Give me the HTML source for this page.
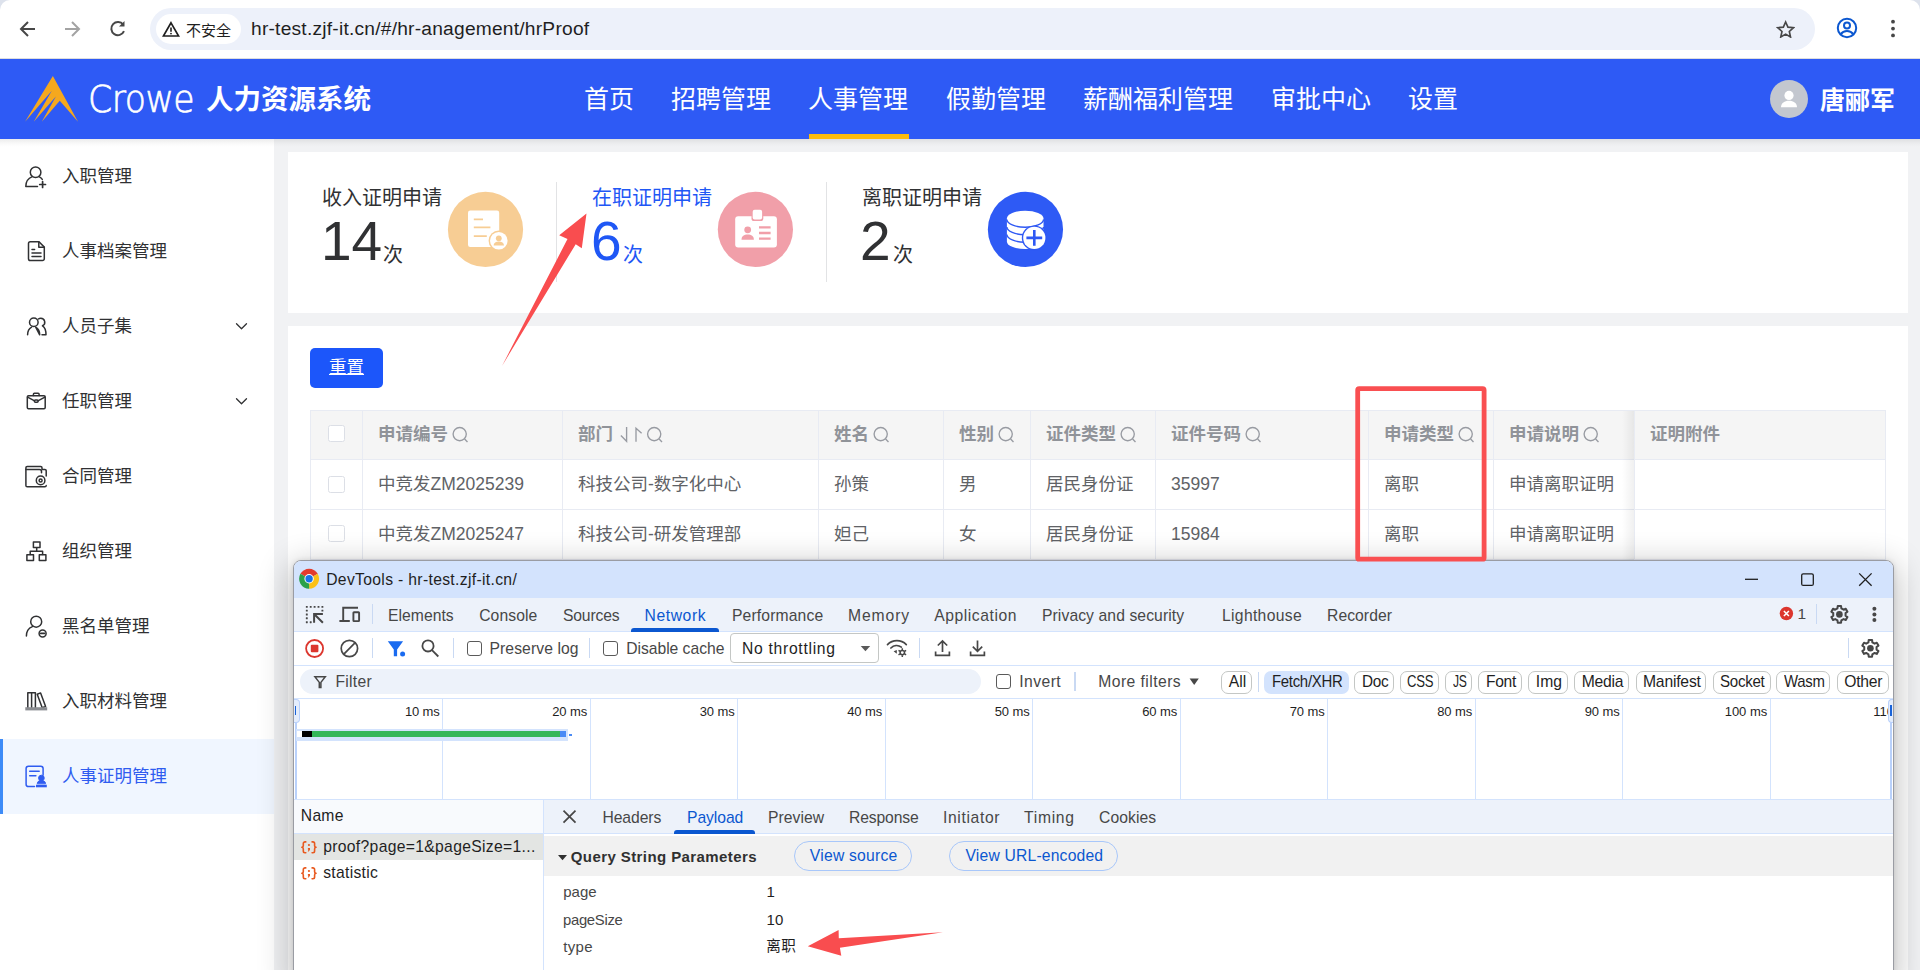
<!DOCTYPE html>
<html lang="zh-CN">
<head>
<meta charset="utf-8">
<title>人力资源系统</title>
<style>
*{box-sizing:border-box;margin:0;padding:0}
html,body{width:1920px;height:970px;overflow:hidden;background:#fff}
body{position:relative;font-family:"Liberation Sans","Noto Sans CJK SC",sans-serif;color:#303133}
.abs{position:absolute}
.t{position:absolute;white-space:nowrap;line-height:1}
/* browser chrome */
#chrome{position:absolute;left:0;top:0;width:1920px;height:58px;background:#fff}
#chromeline{position:absolute;left:0;top:58px;width:1920px;height:1px;background:#dcdde0}
#omni{position:absolute;left:150px;top:8px;width:1665px;height:42px;border-radius:21px;background:#edf1fa}
#chip{position:absolute;left:156px;top:14px;width:85px;height:30px;border-radius:15px;background:#fff}
/* app header */
#hdr{position:absolute;left:0;top:59px;width:1920px;height:80px;background:#2e5af5}
.nav{position:absolute;top:85px;font-size:25px;line-height:28px;color:#fff;white-space:nowrap}
/* sidebar */
#side{position:absolute;left:0;top:139px;width:274px;height:831px;background:#fff}
.mi{position:absolute;left:62px;font-size:17.5px;line-height:20px;color:#303133;white-space:nowrap}
.ic{position:absolute}
/* main */
#main{position:absolute;left:274px;top:139px;width:1646px;height:831px;background:#f1f2f4}
.card{position:absolute;background:#fff}
.th{font-size:17.5px;font-weight:bold;color:#909399}
.td{font-size:17.5px;color:#606266}
</style>
</head>
<body>
<!-- ===== browser toolbar ===== -->
<div id="chrome"></div>
<div id="chromeline"></div>
<div id="omni"></div>
<div id="chip"></div>

<svg class="abs" style="left:15.500px;top:16.700px" width="120" height="24" viewBox="0 0 120 24" fill="none" stroke-width="2" stroke-linecap="butt" stroke-linejoin="miter">
<path d="M19 12H5.5M12 5l-7 7 7 7" stroke="#474747"/>
<path d="M49 12h13.5M56 5l7 7-7 7" stroke="#a3a3a3"/>
<path d="M107.2 7.6A6.6 6.6 0 1 0 108 14.2" stroke="#474747"/>
<path d="M108.5 4v5.5h-5.5z" fill="#474747" stroke="none"/>
</svg>
<svg class="abs" style="left:162px;top:21px" width="18" height="16" viewBox="0 0 18 16" fill="none"><path d="M9 1.8L16.6 15H1.4z" stroke="#1f1f1f" stroke-width="1.7" stroke-linejoin="miter"/><path d="M9 6.5v4.2" stroke="#1f1f1f" stroke-width="1.6"/><circle cx="9" cy="12.6" r="0.9" fill="#1f1f1f"/></svg>
<svg class="abs" style="left:1775.800px;top:19.800px" width="19.300" height="18.400" viewBox="0 0 21 20" fill="none"><path d="M10.5 2.2l2.5 5.6 6.1.6-4.6 4.1 1.3 6-5.3-3.1-5.3 3.1 1.3-6L1.9 8.4 8 7.8z" stroke="#474747" stroke-width="1.8" stroke-linejoin="miter"/></svg>
<svg class="abs" style="left:1835.200px;top:16.200px" width="24" height="24" viewBox="0 0 24 24" fill="none" stroke="#0b57d0" stroke-width="2"><circle cx="12" cy="12" r="9.2"/><circle cx="12" cy="9.6" r="3"/><path d="M5.8 18.2c1.5-2.3 3.7-3.2 6.2-3.2s4.700.9 6.200 3.200"/></svg>
<svg class="abs" style="left:1888.500px;top:17px" width="8" height="24" viewBox="0 0 8 24" fill="#474747"><circle cx="4" cy="4.700" r="1.9"/><circle cx="4" cy="11.600" r="1.9"/><circle cx="4" cy="18.400" r="1.9"/></svg>
<div class="abs" style="left:0;top:0;width:10px;height:10px;background:#dde2ec"></div><div class="abs" style="left:0;top:0;width:12px;height:12px;border-radius:10px 0 0 0;background:#fff"></div><div class="abs" style="left:1910px;top:0;width:10px;height:10px;background:#dde2ec"></div><div class="abs" style="left:1908px;top:0;width:12px;height:12px;border-radius:0 10px 0 0;background:#fff"></div>

<!-- CHROME-ICONS -->
<div class="t" id="unsafe" style="left:186px;top:23px;font-size:15px;color:#1f1f1f">不安全</div>
<div class="t" id="url" style="left:251px;top:19px;font-size:19.2px;letter-spacing:0.22px;color:#1f1f1f">hr-test.zjf-it.cn/#/hr-anagement/hrProof</div>

<!-- ===== app header ===== -->
<div id="hdr"></div>

<svg class="abs" style="left:24px;top:74px" width="56" height="50" viewBox="24 74 56 50"><path d="M52.860 76.050L25.050 121.700 51.850 90.800 33.760 121.700 55.870 96.500 41.800 121.700 59.760 100.850 78 121.700z" fill="#f5a81e"/></svg>

<!-- LOGO -->
<div class="t" id="crowe" style="left:88px;top:80.600px;font-family:'DejaVu Sans','Liberation Sans',sans-serif;font-weight:200;font-size:37.700px;color:#fff;letter-spacing:-0.500px;-webkit-text-stroke:0.700px #fff;transform:scaleX(0.918);transform-origin:0 50%">Crowe</div>
<div class="t" id="sysname" style="left:206px;top:85.500px;font-size:27.5px;font-weight:bold;color:#fff">人力资源系统</div>
<div class="nav" id="n1" style="left:584px">首页</div>
<div class="nav" id="n2" style="left:671px">招聘管理</div>
<div class="nav" id="n3" style="left:808px">人事管理</div>
<div class="nav" id="n4" style="left:946px">假勤管理</div>
<div class="nav" id="n5" style="left:1083px">薪酬福利管理</div>
<div class="nav" id="n6" style="left:1271px">审批中心</div>
<div class="nav" id="n7" style="left:1408px">设置</div>
<div class="abs" style="left:809px;top:134px;width:100px;height:5px;background:#fbbb0c"></div>
<div class="abs" style="left:1770px;top:80px;width:38px;height:38px;border-radius:19px;background:#c3c7cf"></div>

<svg class="abs" style="left:1770px;top:80px" width="38" height="38" viewBox="1770 80 38 38" fill="#fff"><circle cx="1789" cy="95.400" r="4.600"/><path d="M1781 107.200c0-4.200 3.600-6.400 8-6.400s8 2.200 8 6.400z"/></svg>

<!-- AVATAR -->
<div class="t" id="uname" style="left:1820px;top:88px;font-size:25px;font-weight:bold;color:#fff">唐郦军</div>

<!-- ===== sidebar ===== -->
<div id="side"></div>
<div class="abs" style="left:0;top:739px;width:274px;height:75px;background:#f0f6ff"></div>
<div class="abs" style="left:0;top:739px;width:3px;height:75px;background:#3d8bf7"></div>
<div class="mi" style="top:166px">入职管理</div>
<div class="mi" style="top:241px">人事档案管理</div>
<div class="mi" style="top:316px">人员子集</div>
<div class="mi" style="top:391px">任职管理</div>
<div class="mi" style="top:466px">合同管理</div>
<div class="mi" style="top:541px">组织管理</div>
<div class="mi" style="top:616px">黑名单管理</div>
<div class="mi" style="top:691px">入职材料管理</div>
<div class="mi" style="top:766px;color:#2f5cf0">人事证明管理</div>

<svg class="abs" style="left:20px;top:160px" width="32" height="640" viewBox="20 160 32 640" fill="none" stroke="#303133" stroke-width="1.500" stroke-linecap="round" stroke-linejoin="round">
<!-- 1 user add -->
<circle cx="35.600" cy="172.200" r="5.300"/>
<path d="M37.500 186.600H25.800C25.800 181.500 28.600 178 32.300 176.600M38.900 176.600C40.300 177.200 41.500 178.200 42.300 179.400"/>
<path d="M42.600 181.600v5.800M39.700 184.500h5.800" stroke-width="1.700"/>
<!-- 2 doc -->
<path d="M30.300 241.800h8.700l5.300 5.300v11.600a1.800 1.800 0 0 1-1.800 1.800H30.300a1.800 1.800 0 0 1-1.800-1.800v-15.100a1.800 1.800 0 0 1 1.800-1.800z"/>
<path d="M38.800 242v5.300h5.300"/>
<path d="M32 249.600h2.600M32 253.100h9M32 256.600h9"/>
<!-- 3 users -->
<circle cx="33.800" cy="322.300" r="4.300"/>
<path d="M27.600 334.800c0-3.600 1.600-6.400 4-7.700M35.700 327.100c2.400 1.300 4 4.100 4 7.700z"/>
<path d="M38.300 319c.7-.5 1.600-.8 2.500-.8a4 4 0 0 1 1.700 7.600c2.200 1.300 3.500 3.900 3.500 9h-4"/>
<!-- 4 briefcase -->
<rect x="27.300" y="395.800" width="17.900" height="13" rx="1.200"/>
<path d="M33.400 395.600v-1.300a1 1 0 0 1 1-1h3.700a1 1 0 0 1 1 1v1.300"/>
<path d="M27.600 397.200l7 3.700M44.900 397.200l-7 3.700"/>
<rect x="34.400" y="399.900" width="3.700" height="2.400" rx="1"/>
<!-- 5 folder gear -->
<path d="M46.200 476v-5.200a1.300 1.300 0 0 0-1.300-1.300H42v-1.700a1.300 1.300 0 0 0-1.300-1.300H27.200a1.300 1.300 0 0 0-1.300 1.300v17.700a1.300 1.300 0 0 0 1.300 1.300h17.700a1.300 1.300 0 0 0 1.300-1.300"/>
<path d="M26 469.600h13.500a2 2 0 0 1 2 2v1.200"/>
<circle cx="40.600" cy="480.400" r="4.300"/>
<circle cx="40.600" cy="480.400" r="1.500"/>
<!-- 6 org -->
<rect x="33.400" y="542" width="6.600" height="5.600"/>
<rect x="26.900" y="554.800" width="6.600" height="5.800"/>
<rect x="39.300" y="554.800" width="6.600" height="5.800"/>
<path d="M36.700 547.800v3.400M30.200 554.600v-3.400h12.400v3.400"/>
<!-- 7 user minus -->
<circle cx="36.200" cy="621.700" r="5.500"/>
<path d="M26.400 636c0-4.500 2.500-8 6-9.400"/>
<circle cx="42.600" cy="633.400" r="3.500"/>
<path d="M40.700 633.400h3.800" stroke-width="1.700"/>
<!-- 8 books -->
<path d="M27.800 707.500v-14.800h3.800v14.800M31.600 707.500v-14.800h3.800v14.800"/>
<path d="M37.200 694.200l3.400-1.300 5 13.500-3.400 1.300z"/>
<path d="M25.300 708.800h21.900" stroke="#8a8c90" stroke-width="3.200" stroke-linecap="butt"/>
<!-- 9 doc stamp -->
<g stroke="#2f5cf0">
<path d="M34.500 786.600h-6a2.400 2.400 0 0 1-2.400-2.400v-15.600a2.400 2.400 0 0 1 2.400-2.400h12.200a2.400 2.400 0 0 1 2.400 2.400v6.400"/>
<path d="M29.700 771.300h9.500M29.700 775.700h6.200"/>
<path d="M36 786h10.800" stroke-width="2.600" stroke-linecap="butt"/>
<path d="M37.300 783.300c0-1.500 1.200-2.300 2.700-2.600-1-.9-1.400-1.700-1.400-2.700a2.800 2.800 0 0 1 5.600 0c0 1-.4 1.800-1.400 2.700 1.500.3 2.700 1.100 2.700 2.600z" fill="#2f5cf0" stroke-width="1"/>
</g>
</svg>
<svg class="abs" style="left:234px;top:320px" width="16" height="90" viewBox="234 320 16 90" fill="none" stroke="#303133" stroke-width="1.300" stroke-linecap="round" stroke-linejoin="round"><path d="M236.500 323.700l5 5 5-5M236.500 398.700l5 5 5-5"/></svg>

<!-- SIDE-ICONS -->

<!-- ===== main ===== -->
<div id="main"></div>
<div class="abs" style="left:0;top:139px;width:1920px;height:8px;background:linear-gradient(rgba(0,0,0,0.075),rgba(0,0,0,0.02) 60%,rgba(0,0,0,0))"></div>
<div class="card" id="c1" style="left:288px;top:152px;width:1620px;height:161px"></div>
<div class="card" id="c2" style="left:288px;top:326px;width:1620px;height:644px"></div>

<div class="t" id="s1l" style="left:322px;top:188px;font-size:20px;color:#303133">收入证明申请</div>
<div class="t" id="s1n" style="left:321px;top:214px;font-size:55px;color:#303133">14</div>
<div class="t" id="s1u" style="left:383px;top:245px;font-size:20px;color:#303133">次</div>
<div class="abs" style="left:556px;top:182px;width:1px;height:100px;background:#e2e3e5"></div>
<div class="t" id="s2l" style="left:592px;top:188px;font-size:20px;color:#1f57f5">在职证明申请</div>
<div class="t" id="s2n" style="left:591px;top:214px;font-size:55px;color:#1f57f5">6</div>
<div class="t" id="s2u" style="left:623px;top:245px;font-size:20px;color:#1f57f5">次</div>
<div class="abs" style="left:826px;top:182px;width:1px;height:100px;background:#e2e3e5"></div>
<div class="t" id="s3l" style="left:862px;top:188px;font-size:20px;color:#303133">离职证明申请</div>
<div class="t" id="s3n" style="left:860px;top:214px;font-size:55px;color:#303133">2</div>
<div class="t" id="s3u" style="left:893px;top:245px;font-size:20px;color:#303133">次</div>
<svg class="abs" style="left:440px;top:185px" width="640" height="90" viewBox="440 185 640 90">
<!-- icon 1 -->
<circle cx="485.500" cy="229.400" r="37.600" fill="#f7cd94"/>
<rect x="468" y="210.600" width="31.200" height="36.400" rx="2.200" fill="#fff"/>
<path d="M473.800 219.400h9.200M473.800 227.300h16.600M473.800 236.200h13" stroke="#f7cd94" stroke-width="1.700" fill="none"/>
<circle cx="498.800" cy="240.800" r="10.200" fill="#f7cd94"/>
<circle cx="498.800" cy="240.800" r="8.800" fill="#fff"/>
<circle cx="498.800" cy="238.300" r="2.900" fill="#f7cd94"/>
<path d="M493.600 245.400c0-2.600 2.300-3.900 5.200-3.900s5.200 1.300 5.200 3.900z" fill="#f7cd94"/>
<!-- icon 2 -->
<circle cx="755.400" cy="229.400" r="37.600" fill="#f19fa9"/>
<rect x="735.200" y="216.300" width="41.700" height="31.200" rx="3" fill="#fff"/>
<rect x="751.500" y="208.800" width="11.800" height="12.200" rx="2.600" fill="#f19fa9"/>
<rect x="752.700" y="209.800" width="9.400" height="9.800" rx="2" fill="#fff"/>
<circle cx="747.700" cy="229.800" r="3.400" fill="#f19fa9"/>
<path d="M741.500 239.800c0-3.600 2.600-5.200 6.200-5.200s6.200 1.600 6.200 5.200z" fill="#f19fa9"/>
<path d="M759 227.300h11.600M759 233h11.600M759 238.700h11.600" stroke="#f19fa9" stroke-width="2.300" fill="none"/>
<!-- icon 3 -->
<circle cx="1025.450" cy="229.400" r="37.600" fill="#2e5af5"/>
<path d="M1006.900 218.400a18.300 7.700 0 0 1 36.600 0v23a18.300 7.700 0 0 1-36.600 0z" fill="#fff"/>
<path d="M1006.900 219.500c0 4.300 8.200 7.700 18.300 7.700s18.300-3.400 18.300-7.700M1006.900 227c0 4.300 8.200 7.700 18.300 7.700s18.300-3.400 18.300-7.700M1006.900 234.500c0 4.300 8.200 7.700 18.300 7.700s18.300-3.400 18.300-7.700" stroke="#2e58f4" stroke-width="1.400" fill="none"/>
<circle cx="1034.300" cy="237.900" r="12.500" fill="#2e58f4"/>
<circle cx="1034.300" cy="237.900" r="11.100" fill="#fff"/>
<path d="M1026.400 237.900h15.800M1034.300 230v15.800" stroke="#2e58f4" stroke-width="2.600" fill="none"/>
</svg>

<!-- STATS -->
<div class="abs" id="btn" style="left:310px;top:348px;width:73px;height:40px;border-radius:5px;background:#1c56fa"></div>
<div class="t" id="btnt" style="left:329px;top:359px;font-size:17.5px;color:#fff;text-decoration:underline;text-underline-offset:1px;text-decoration-thickness:1px">重置</div>
<div class="abs" style="left:310px;top:410px;width:1576px;height:49px;background:#f5f5f5"></div>
<div class="abs" style="left:310px;top:410px;width:1576px;height:1px;background:#e8ebf3"></div>
<div class="abs" style="left:310px;top:459px;width:1576px;height:1px;background:#e8ebf3"></div>
<div class="abs" style="left:310px;top:509px;width:1576px;height:1px;background:#e8ebf3"></div>
<div class="abs" style="left:310px;top:559px;width:1576px;height:1px;background:#e8ebf3"></div>
<div class="abs" style="left:310px;top:410px;width:1px;height:160px;background:#e8ebf3"></div>
<div class="abs" style="left:362px;top:410px;width:1px;height:160px;background:#e8ebf3"></div>
<div class="abs" style="left:562px;top:410px;width:1px;height:160px;background:#e8ebf3"></div>
<div class="abs" style="left:818px;top:410px;width:1px;height:160px;background:#e8ebf3"></div>
<div class="abs" style="left:943px;top:410px;width:1px;height:160px;background:#e8ebf3"></div>
<div class="abs" style="left:1030px;top:410px;width:1px;height:160px;background:#e8ebf3"></div>
<div class="abs" style="left:1155px;top:410px;width:1px;height:160px;background:#e8ebf3"></div>
<div class="abs" style="left:1368px;top:410px;width:1px;height:160px;background:#e8ebf3"></div>
<div class="abs" style="left:1493px;top:410px;width:1px;height:160px;background:#e8ebf3"></div>
<div class="abs" style="left:1634px;top:410px;width:1px;height:160px;background:#e8ebf3"></div>
<div class="abs" style="left:1885px;top:410px;width:1px;height:160px;background:#e8ebf3"></div>
<div class="abs" style="left:1622px;top:411px;width:12px;height:159px;background:linear-gradient(to right,rgba(0,0,0,0),rgba(0,0,0,0.06))"></div>
<div class="abs" style="left:328px;top:425px;width:17px;height:17px;border:1px solid #dcdfe6;border-radius:2.500px;background:#fff"></div>
<div class="abs" style="left:328px;top:476px;width:17px;height:17px;border:1px solid #dcdfe6;border-radius:2.500px;background:#fff"></div>
<div class="abs" style="left:328px;top:525px;width:17px;height:17px;border:1px solid #dcdfe6;border-radius:2.500px;background:#fff"></div>
<div class="t th" style="left:378px;top:426px">申请编号</div>
<div class="t th" style="left:578px;top:426px">部门</div>
<div class="t th" style="left:834px;top:426px">姓名</div>
<div class="t th" style="left:959px;top:426px">性别</div>
<div class="t th" style="left:1046px;top:426px">证件类型</div>
<div class="t th" style="left:1171px;top:426px">证件号码</div>
<div class="t th" style="left:1384px;top:426px">申请类型</div>
<div class="t th" style="left:1509px;top:426px">申请说明</div>
<div class="t th" style="left:1650px;top:426px">证明附件</div>
<div class="t td" style="left:378px;top:476px">中竞发ZM2025239</div>
<div class="t td" style="left:578px;top:476px">科技公司-数字化中心</div>
<div class="t td" style="left:834px;top:476px">孙策</div>
<div class="t td" style="left:959px;top:476px">男</div>
<div class="t td" style="left:1046px;top:476px">居民身份证</div>
<div class="t td" style="left:1171px;top:476px">35997</div>
<div class="t td" style="left:1384px;top:476px">离职</div>
<div class="t td" style="left:1509px;top:476px">申请离职证明</div>
<div class="t td" style="left:378px;top:526px">中竞发ZM2025247</div>
<div class="t td" style="left:578px;top:526px">科技公司-研发管理部</div>
<div class="t td" style="left:834px;top:526px">妲己</div>
<div class="t td" style="left:959px;top:526px">女</div>
<div class="t td" style="left:1046px;top:526px">居民身份证</div>
<div class="t td" style="left:1171px;top:526px">15984</div>
<div class="t td" style="left:1384px;top:526px">离职</div>
<div class="t td" style="left:1509px;top:526px">申请离职证明</div>
<svg class="abs" style="left:310px;top:420px" width="1576" height="30" viewBox="310 420 1576 30" fill="none" stroke="#989ba2" stroke-width="1.350" stroke-linecap="butt"><circle cx="459.7" cy="434.1" r="6.600"/><path d="M464.59999999999997 439.0l2.900 2.900"/><path d="M626.6 427v14.300l-5.700-5.700M636.0 441.800v-13.500l5.600 5"/><circle cx="654.2" cy="434.1" r="6.600"/><path d="M659.1 439.0l2.900 2.900"/><circle cx="880.7" cy="434.1" r="6.600"/><path d="M885.6 439.0l2.900 2.900"/><circle cx="1005.7" cy="434.1" r="6.600"/><path d="M1010.6 439.0l2.900 2.900"/><circle cx="1127.7" cy="434.1" r="6.600"/><path d="M1132.6000000000001 439.0l2.900 2.900"/><circle cx="1252.7" cy="434.1" r="6.600"/><path d="M1257.6000000000001 439.0l2.900 2.900"/><circle cx="1465.7" cy="434.1" r="6.600"/><path d="M1470.6000000000001 439.0l2.900 2.900"/><circle cx="1590.7" cy="434.1" r="6.600"/><path d="M1595.6000000000001 439.0l2.900 2.900"/></svg>
<!-- TABLE -->
<!-- DT-START -->
<div class="abs" id="dtwin" style="left:293px;top:560px;width:1601px;height:420px;border-radius:8px 8px 0 0;background:#fff;border:1px solid #9a9ca3;box-shadow:0 8px 32px 4px rgba(0,0,0,0.24),0 0 5px rgba(0,0,0,0.10)"></div>
<div class="abs" style="left:294px;top:561px;width:1599px;height:37px;border-radius:7px 7px 0 0;background:#d3e3fd"></div>
<div class="abs" style="left:294px;top:598px;width:1599px;height:34px;background:#edf2fa;border-bottom:1px solid #d3e3fd"></div>
<div class="abs" style="left:294px;top:632px;width:1599px;height:34px;background:#fff;border-bottom:1px solid #d3e3fd"></div>
<div class="abs" style="left:294px;top:666px;width:1599px;height:33px;background:#fff;border-bottom:1px solid #d3e3fd"></div>
<div class="abs" style="left:631px;top:628px;width:88px;height:4px;border-radius:3px 3px 0 0;background:#0b57d0"></div>
<div class="abs" style="left:372px;top:604px;width:1px;height:20px;background:#c9d9f3"></div>
<div class="abs" style="left:372px;top:638px;width:1px;height:20px;background:#c9d9f3"></div>
<div class="abs" style="left:453px;top:638px;width:1px;height:20px;background:#c9d9f3"></div>
<div class="abs" style="left:589px;top:638px;width:1px;height:20px;background:#c9d9f3"></div>
<div class="abs" style="left:919px;top:638px;width:1px;height:20px;background:#c9d9f3"></div>
<div class="abs" style="left:1816px;top:604px;width:1px;height:20px;background:#c9d9f3"></div>
<div class="abs" style="left:1848px;top:638px;width:1px;height:20px;background:#c9d9f3"></div>
<div class="abs" style="left:1074px;top:672px;width:2px;height:19px;background:#c9d9f3"></div>
<div class="abs" style="left:1258px;top:672px;width:1px;height:20px;background:#c9d9f3"></div>
<div class="abs" style="left:467px;top:641px;width:15px;height:15px;border:1.500px solid #5a5a5a;border-radius:3px;background:#fff"></div>
<div class="abs" style="left:603px;top:641px;width:15px;height:15px;border:1.500px solid #5a5a5a;border-radius:3px;background:#fff"></div>
<div class="abs" style="left:996px;top:674px;width:15px;height:15px;border:1.500px solid #5a5a5a;border-radius:3px;background:#fff"></div>
<div class="abs" style="left:730px;top:633px;width:149px;height:30px;border:1px solid #c4c7c5;border-radius:4px;background:#fff"></div>
<div class="abs" style="left:300px;top:669px;width:681px;height:25px;border-radius:12.500px;background:#edf2fa"></div>
<div class="abs" style="left:1221.2px;top:670.500px;width:31.3px;height:23.500px;border-radius:7px;border:1px solid #c4c7c5;background:#fff"></div>
<div class="abs" style="left:1264.2px;top:670.500px;width:84.6px;height:23.500px;border-radius:7px;background:#d3e3fd"></div>
<div class="abs" style="left:1354.2px;top:670.500px;width:40.3px;height:23.500px;border-radius:7px;border:1px solid #c4c7c5;background:#fff"></div>
<div class="abs" style="left:1400.2px;top:670.500px;width:39.3px;height:23.500px;border-radius:7px;border:1px solid #c4c7c5;background:#fff"></div>
<div class="abs" style="left:1445.2px;top:670.500px;width:27.3px;height:23.500px;border-radius:7px;border:1px solid #c4c7c5;background:#fff"></div>
<div class="abs" style="left:1478.2px;top:670.500px;width:44.3px;height:23.500px;border-radius:7px;border:1px solid #c4c7c5;background:#fff"></div>
<div class="abs" style="left:1528.2px;top:670.500px;width:40.0px;height:23.500px;border-radius:7px;border:1px solid #c4c7c5;background:#fff"></div>
<div class="abs" style="left:1574.2px;top:670.500px;width:55.3px;height:23.500px;border-radius:7px;border:1px solid #c4c7c5;background:#fff"></div>
<div class="abs" style="left:1635.8px;top:670.500px;width:70.7px;height:23.500px;border-radius:7px;border:1px solid #c4c7c5;background:#fff"></div>
<div class="abs" style="left:1712.5px;top:670.500px;width:58.0px;height:23.500px;border-radius:7px;border:1px solid #c4c7c5;background:#fff"></div>
<div class="abs" style="left:1776.2px;top:670.500px;width:54.3px;height:23.500px;border-radius:7px;border:1px solid #c4c7c5;background:#fff"></div>
<div class="abs" style="left:1836.5px;top:670.500px;width:52.3px;height:23.500px;border-radius:7px;border:1px solid #c4c7c5;background:#fff"></div>
<div class="abs" style="left:294px;top:699px;width:1599px;height:101px;background:#fff;border-bottom:1px solid #d3e3fd"></div>
<div class="abs" style="left:442.0px;top:699px;width:1px;height:100px;background:#d3e3fd"></div>
<div class="abs" style="left:589.5px;top:699px;width:1px;height:100px;background:#d3e3fd"></div>
<div class="abs" style="left:737.0px;top:699px;width:1px;height:100px;background:#d3e3fd"></div>
<div class="abs" style="left:884.5px;top:699px;width:1px;height:100px;background:#d3e3fd"></div>
<div class="abs" style="left:1032.0px;top:699px;width:1px;height:100px;background:#d3e3fd"></div>
<div class="abs" style="left:1179.5px;top:699px;width:1px;height:100px;background:#d3e3fd"></div>
<div class="abs" style="left:1327.0px;top:699px;width:1px;height:100px;background:#d3e3fd"></div>
<div class="abs" style="left:1474.5px;top:699px;width:1px;height:100px;background:#d3e3fd"></div>
<div class="abs" style="left:1622.0px;top:699px;width:1px;height:100px;background:#d3e3fd"></div>
<div class="abs" style="left:1769.5px;top:699px;width:1px;height:100px;background:#d3e3fd"></div>
<div class="abs" style="left:295px;top:699px;width:1.500px;height:100px;background:#b9d1fb"></div>
<div class="abs" style="left:1890px;top:699px;width:2px;height:100px;background:#b9d1fb"></div>
<div class="abs" style="left:296px;top:729px;width:272px;height:12px;background:#d3e3fd"></div>
<div class="abs" style="left:297px;top:731px;width:5px;height:6px;background:#fff"></div>
<div class="abs" style="left:302px;top:731px;width:10px;height:6px;background:#000"></div>
<div class="abs" style="left:312px;top:731px;width:248px;height:6px;background:#34b75a"></div>
<div class="abs" style="left:560px;top:731px;width:6px;height:6px;background:#4b8bf5"></div>
<div class="abs" style="left:569px;top:734px;width:3px;height:2px;background:#4b8bf5"></div>
<div class="abs" style="left:294px;top:699px;width:6px;height:24px;border-radius:0 4px 4px 0;background:#e4edfc;border:1px solid #b9d1fb;border-left:none"></div>
<div class="abs" style="left:295px;top:706px;width:1.300px;height:9px;background:#1a63d8"></div>
<div class="abs" style="left:1888px;top:699px;width:5px;height:24px;border-radius:4px 0 0 4px;background:#e4edfc;border:1px solid #b9d1fb;border-right:none"></div>
<div class="abs" style="left:1890px;top:705px;width:2px;height:11px;background:#1a63d8"></div>
<div class="abs" style="left:294px;top:800px;width:249px;height:34px;background:#f8fafd;border-bottom:1px solid #d3e3fd"></div>
<div class="abs" style="left:294px;top:834px;width:249px;height:26px;background:#e3e5e3"></div>
<div class="abs" style="left:543px;top:800px;width:1px;height:170px;background:#d3e3fd"></div>
<div class="abs" style="left:544px;top:800px;width:1349px;height:34px;background:#edf2fa;border-bottom:1px solid #d3e3fd"></div>
<div class="abs" style="left:674px;top:830px;width:81px;height:4px;border-radius:3px 3px 0 0;background:#0b57d0"></div>
<div class="abs" style="left:544px;top:836px;width:1349px;height:40px;background:#f1f1f1"></div>
<div class="abs" style="left:794px;top:841px;width:118px;height:30px;border-radius:15px;border:1px solid #a8c7fa"></div>
<div class="abs" style="left:949px;top:841px;width:169px;height:30px;border-radius:15px;border:1px solid #a8c7fa"></div>
<svg class="abs" style="left:294px;top:561px" width="1599" height="409" viewBox="294 561 1599 409">
<path d="M309.1 578.8L300.44 573.80A10 10 0 0 1 317.76 573.80Z" fill="#e33b2e"/>
<path d="M309.1 578.8L317.76 573.80A10 10 0 0 1 309.10 588.80Z" fill="#fbc116"/>
<path d="M309.1 578.8L309.10 588.80A10 10 0 0 1 300.44 573.80Z" fill="#2ca14a"/>
<circle cx="309.1" cy="578.8" r="4.700" fill="#fff"/><circle cx="309.1" cy="578.8" r="3.700" fill="#1a73e8"/>
<g fill="none" stroke="#1f1f1f" stroke-width="1.300"><path d="M1745 579.300h13"/><rect x="1801.700" y="573.800" width="11.600" height="11.600" rx="1.500"/><path d="M1859.200 573.400l12.400 12.400M1871.600 573.400l-12.400 12.400"/></g>
<g fill="#474747"><rect x="305.85" y="605.95" width="1.900" height="1.900" rx=".3"/><rect x="309.75" y="605.95" width="1.900" height="1.900" rx=".3"/><rect x="313.65" y="605.95" width="1.900" height="1.900" rx=".3"/><rect x="317.55" y="605.95" width="1.900" height="1.900" rx=".3"/><rect x="321.45" y="605.95" width="1.900" height="1.900" rx=".3"/><rect x="305.85" y="609.65" width="1.900" height="1.900" rx=".3"/><rect x="305.85" y="613.55" width="1.900" height="1.900" rx=".3"/><rect x="305.85" y="617.35" width="1.900" height="1.900" rx=".3"/><rect x="305.85" y="621.25" width="1.900" height="1.900" rx=".3"/><rect x="309.75" y="621.25" width="1.900" height="1.900" rx=".3"/><rect x="321.45" y="609.65" width="1.900" height="1.900" rx=".3"/></g><g fill="none" stroke="#474747" stroke-width="1.900"><path d="M322.900 622.800l-8.300-8.300M314.100 622.700v-8.700h8.800" stroke-width="2"/></g>
<g fill="none" stroke="#474747" stroke-width="1.900"><path d="M343.200 620.200v-12.500h14.800M339.400 621h10.400"/><rect x="353.400" y="612.200" width="5.700" height="8.900" rx=".6"/></g>
<circle cx="314.600" cy="648.500" r="8.500" fill="none" stroke="#dc362e" stroke-width="1.800"/><rect x="310.800" y="644.700" width="7.600" height="7.600" rx="1" fill="#dc362e"/>
<g fill="none" stroke="#474747" stroke-width="1.700"><circle cx="349.400" cy="648.500" r="8.200"/><path d="M343.600 654.300l11.600-11.600"/></g>
<path d="M387.800 641.200h15.300l-6 8.300v6.700h-3.300v-6.700z" fill="#1a6bf0"/><circle cx="402.600" cy="654.100" r="2.500" fill="#1a6bf0"/>
<g fill="none" stroke="#474747" stroke-width="1.800"><circle cx="428" cy="645.900" r="5.600"/><path d="M432 650.200l6.300 6.300"/></g>
<path d="M860.700 646h9.500l-4.750 5.300z" fill="#5a5a5a"/>
<g fill="none" stroke="#474747" stroke-width="1.700" stroke-linecap="round"><path d="M887.500 644.600a13.200 13.200 0 0 1 18.800 0"/><path d="M890.900 648a8.400 8.400 0 0 1 10.500-.9"/></g><path d="M893.600 651.200l3.200-1.200v3.800z" fill="#474747"/>
<g stroke="#474747" stroke-width="1.500" fill="none"><circle cx="902.300" cy="652.600" r="2.200"/><path d="M902.300 648.200v1.700M902.300 655.300v1.700M898.500 650.400l1.500.85M904.600 653.950l1.500.85M898.500 654.800l1.500-.85M904.600 651.250l1.500-.85"/></g>
<g fill="none" stroke="#474747" stroke-width="1.700"><path d="M942.500 652v-10.800M937.800 645.500l4.700-4.600 4.700 4.600M935.600 651.600v3.800h13.800v-3.800"/><path d="M977.500 640.400v10.800M972.800 646.700l4.700 4.600 4.700-4.600M970.600 651.600v3.800h13.800v-3.800"/></g>
<circle cx="1786.400" cy="613.500" r="6.700" fill="#dc362e"/><path d="M1783.900 611l5 5M1788.900 611l-5 5" stroke="#fff" stroke-width="1.600" fill="none"/>
<path d="M1837.45 608.41 L1837.72 606.07 L1841.08 606.07 L1841.35 608.41 L1843.62 609.72 L1845.78 608.78 L1847.46 611.69 L1845.56 613.09 L1845.56 615.71 L1847.46 617.11 L1845.78 620.02 L1843.62 619.08 L1841.35 620.39 L1841.08 622.73 L1837.72 622.73 L1837.45 620.39 L1835.18 619.08 L1833.02 620.02 L1831.34 617.11 L1833.24 615.71 L1833.24 613.09 L1831.34 611.69 L1833.02 608.78 L1835.18 609.72Z" fill="none" stroke="#474747" stroke-width="2" stroke-linejoin="round"/><circle cx="1839.4" cy="614.4" r="3.300" fill="#474747"/>
<path d="M1868.45 642.31 L1868.72 639.97 L1872.08 639.97 L1872.35 642.31 L1874.62 643.62 L1876.78 642.68 L1878.46 645.59 L1876.56 646.99 L1876.56 649.61 L1878.46 651.01 L1876.78 653.92 L1874.62 652.98 L1872.35 654.29 L1872.08 656.63 L1868.72 656.63 L1868.45 654.29 L1866.18 652.98 L1864.02 653.92 L1862.34 651.01 L1864.24 649.61 L1864.24 646.99 L1862.34 645.59 L1864.02 642.68 L1866.18 643.62Z" fill="none" stroke="#474747" stroke-width="2" stroke-linejoin="round"/><circle cx="1870.4" cy="648.3" r="3.300" fill="#474747"/>
<g fill="#474747"><circle cx="1874.400" cy="608.700" r="2"/><circle cx="1874.400" cy="614.400" r="2"/><circle cx="1874.400" cy="620.100" r="2"/></g>
<path d="M314.900 676.700h10.400l-4.400 5.700v5.200h-1.600v-5.200z" fill="none" stroke="#474747" stroke-width="1.500" stroke-linejoin="miter"/>
<path d="M1189.600 678.500h9.200l-4.600 6.400z" fill="#474747"/>
<path d="M563.500 810.700l12 12M575.500 810.700l-12 12" stroke="#474747" stroke-width="1.700" fill="none"/>
<path d="M558 855h9l-4.500 5.200z" fill="#303030"/>
<g fill="none" stroke="#e8591f" stroke-width="1.600" stroke-linecap="round" stroke-linejoin="round"><path d="M305.8 841.9h-.800a1.700 1.700 0 0 0-1.700 1.700v2.100a1.600 1.600 0 0 1-1.400 1.600 1.600 1.600 0 0 1 1.400 1.600v2.100a1.700 1.700 0 0 0 1.700 1.700h.800"/><path d="M312.1 841.9h.800a1.700 1.700 0 0 1 1.700 1.700v2.100a1.600 1.600 0 0 0 1.400 1.600 1.600 1.600 0 0 0-1.400 1.600v2.100a1.700 1.700 0 0 1-1.700 1.700h-.800"/></g><circle cx="308.95" cy="845.0" r="1.100" fill="#e8591f"/><path d="M307.9 848.0h2.100v1.700l-1.300 1.900h-.900l.700-1.900h-.600z" fill="#e8591f"/>
<g fill="none" stroke="#e8591f" stroke-width="1.600" stroke-linecap="round" stroke-linejoin="round"><path d="M305.8 867.9h-.800a1.700 1.700 0 0 0-1.700 1.700v2.100a1.600 1.600 0 0 1-1.400 1.600 1.600 1.600 0 0 1 1.400 1.600v2.100a1.700 1.700 0 0 0 1.700 1.700h.800"/><path d="M312.1 867.9h.800a1.700 1.700 0 0 1 1.700 1.700v2.100a1.600 1.600 0 0 0 1.400 1.600 1.600 1.600 0 0 0-1.400 1.600v2.100a1.700 1.700 0 0 1-1.700 1.700h-.800"/></g><circle cx="308.95" cy="871.0" r="1.100" fill="#e8591f"/><path d="M307.9 874.0h2.100v1.700l-1.300 1.900h-.900l.700-1.900h-.600z" fill="#e8591f"/>
</svg>
<div class="t" id="dt_title" style="left:326.2px;top:571.7px;font-size:15.7px;color:#1f1f1f;letter-spacing:0.33px">DevTools - hr-test.zjf-it.cn/</div>
<div class="t" id="dt_tab0" style="left:388.0px;top:607.9px;font-size:15.7px;color:#474747;letter-spacing:0.04px">Elements</div>
<div class="t" id="dt_tab1" style="left:479.2px;top:607.9px;font-size:15.7px;color:#474747;letter-spacing:0.09px">Console</div>
<div class="t" id="dt_tab2" style="left:563.0px;top:607.9px;font-size:15.7px;color:#474747;letter-spacing:-0.17px">Sources</div>
<div class="t" id="dt_tab3" style="left:644.5px;top:607.9px;font-size:15.7px;color:#0b57d0;letter-spacing:0.59px">Network</div>
<div class="t" id="dt_tab4" style="left:732.0px;top:607.9px;font-size:15.7px;color:#474747;letter-spacing:0.13px">Performance</div>
<div class="t" id="dt_tab5" style="left:848.0px;top:607.9px;font-size:15.7px;color:#474747;letter-spacing:0.89px">Memory</div>
<div class="t" id="dt_tab6" style="left:934.2px;top:607.9px;font-size:15.7px;color:#474747;letter-spacing:0.55px">Application</div>
<div class="t" id="dt_tab7" style="left:1042.0px;top:607.9px;font-size:15.7px;color:#474747;letter-spacing:0.09px">Privacy and security</div>
<div class="t" id="dt_tab8" style="left:1222.0px;top:607.9px;font-size:15.7px;color:#474747;letter-spacing:0.32px">Lighthouse</div>
<div class="t" id="dt_tab9" style="left:1327.0px;top:607.9px;font-size:15.7px;color:#474747;letter-spacing:0.06px">Recorder</div>
<div class="t" id="dt_pres" style="left:489.5px;top:640.5px;font-size:15.7px;color:#474747;letter-spacing:0.09px">Preserve log</div>
<div class="t" id="dt_dis" style="left:626.2px;top:640.5px;font-size:15.7px;color:#474747;letter-spacing:-0.03px">Disable cache</div>
<div class="t" id="dt_thr" style="left:742.0px;top:640.5px;font-size:15.7px;color:#1f1f1f;letter-spacing:0.70px">No throttling</div>
<div class="t" id="dt_filter" style="left:335.5px;top:673.7px;font-size:15.7px;color:#474747;letter-spacing:0.27px">Filter</div>
<div class="t" id="dt_inv" style="left:1019.2px;top:673.7px;font-size:15.7px;color:#474747;letter-spacing:0.46px">Invert</div>
<div class="t" id="dt_more" style="left:1098.2px;top:673.7px;font-size:15.7px;color:#474747;letter-spacing:0.45px">More filters</div>
<div class="t" id="dt_chip0" style="left:1228.8px;top:673.7px;font-size:15.7px;color:#1f1f1f;letter-spacing:-0.01px">All</div>
<div class="t" id="dt_chip1" style="left:1272.0px;top:673.7px;font-size:15.7px;color:#1f1f1f;letter-spacing:-0.30px;transform:scaleX(0.951);transform-origin:0 50%">Fetch/XHR</div>
<div class="t" id="dt_chip2" style="left:1361.8px;top:673.7px;font-size:15.7px;color:#1f1f1f;letter-spacing:-0.30px;transform:scaleX(0.978);transform-origin:0 50%">Doc</div>
<div class="t" id="dt_chip3" style="left:1407.0px;top:673.7px;font-size:15.7px;color:#1f1f1f;letter-spacing:-0.30px;transform:scaleX(0.835);transform-origin:0 50%">CSS</div>
<div class="t" id="dt_chip4" style="left:1452.5px;top:673.7px;font-size:15.7px;color:#1f1f1f;letter-spacing:-0.30px;transform:scaleX(0.773);transform-origin:0 50%">JS</div>
<div class="t" id="dt_chip5" style="left:1486.2px;top:673.7px;font-size:15.7px;color:#1f1f1f;letter-spacing:-0.30px;transform:scaleX(0.994);transform-origin:0 50%">Font</div>
<div class="t" id="dt_chip6" style="left:1535.8px;top:673.7px;font-size:15.7px;color:#1f1f1f;letter-spacing:0.01px">Img</div>
<div class="t" id="dt_chip7" style="left:1581.8px;top:673.7px;font-size:15.7px;color:#1f1f1f;letter-spacing:-0.27px">Media</div>
<div class="t" id="dt_chip8" style="left:1643.0px;top:673.7px;font-size:15.7px;color:#1f1f1f;letter-spacing:-0.20px">Manifest</div>
<div class="t" id="dt_chip9" style="left:1720.0px;top:673.7px;font-size:15.7px;color:#1f1f1f;letter-spacing:-0.30px;transform:scaleX(0.962);transform-origin:0 50%">Socket</div>
<div class="t" id="dt_chip10" style="left:1783.8px;top:673.7px;font-size:15.7px;color:#1f1f1f;letter-spacing:-0.30px;transform:scaleX(0.951);transform-origin:0 50%">Wasm</div>
<div class="t" id="dt_chip11" style="left:1844.2px;top:673.7px;font-size:15.7px;color:#1f1f1f;letter-spacing:-0.21px">Other</div>
<div class="t" id="dt_ms1" style="left:404.9px;top:704.8px;font-size:13px;color:#1f1f1f;letter-spacing:-0.12px">10 ms</div>
<div class="t" id="dt_ms2" style="left:552.2px;top:704.8px;font-size:13px;color:#1f1f1f;letter-spacing:-0.08px">20 ms</div>
<div class="t" id="dt_ms3" style="left:699.7px;top:704.8px;font-size:13px;color:#1f1f1f;letter-spacing:-0.08px">30 ms</div>
<div class="t" id="dt_ms4" style="left:847.2px;top:704.8px;font-size:13px;color:#1f1f1f;letter-spacing:-0.08px">40 ms</div>
<div class="t" id="dt_ms5" style="left:994.7px;top:704.8px;font-size:13px;color:#1f1f1f;letter-spacing:-0.08px">50 ms</div>
<div class="t" id="dt_ms6" style="left:1142.2px;top:704.8px;font-size:13px;color:#1f1f1f;letter-spacing:-0.08px">60 ms</div>
<div class="t" id="dt_ms7" style="left:1289.7px;top:704.8px;font-size:13px;color:#1f1f1f;letter-spacing:-0.08px">70 ms</div>
<div class="t" id="dt_ms8" style="left:1437.2px;top:704.8px;font-size:13px;color:#1f1f1f;letter-spacing:-0.08px">80 ms</div>
<div class="t" id="dt_ms9" style="left:1584.7px;top:704.8px;font-size:13px;color:#1f1f1f;letter-spacing:-0.08px">90 ms</div>
<div class="t" id="dt_ms10" style="left:1724.7px;top:704.8px;font-size:13px;color:#1f1f1f;letter-spacing:-0.02px">100 ms</div>
<div class="abs" style="left:1873.2px;top:704.8px;width:15.3px;height:16px;overflow:hidden"><div class="t" id="dt_ms11" style="left:0;top:0;font-size:13px;color:#1f1f1f;letter-spacing:0.02px">110 ms</div></div>
<div class="t" id="dt_name" style="left:300.8px;top:807.9px;font-size:15.7px;color:#1f1f1f;letter-spacing:0.26px">Name</div>
<div class="t" id="dt_req1" style="left:323.2px;top:838.7px;font-size:15.7px;color:#1f1f1f;letter-spacing:0.32px">proof?page=1&amp;pageSize=1...</div>
<div class="t" id="dt_req2" style="left:323.2px;top:865.0px;font-size:15.7px;color:#1f1f1f;letter-spacing:0.30px">statistic</div>
<div class="t" id="dt_dtab0" style="left:602.5px;top:809.7px;font-size:15.7px;color:#474747;letter-spacing:-0.09px">Headers</div>
<div class="t" id="dt_dtab1" style="left:687.0px;top:809.7px;font-size:15.7px;color:#0b57d0;letter-spacing:-0.07px">Payload</div>
<div class="t" id="dt_dtab2" style="left:768.0px;top:809.7px;font-size:15.7px;color:#474747;letter-spacing:0.06px">Preview</div>
<div class="t" id="dt_dtab3" style="left:849.0px;top:809.7px;font-size:15.7px;color:#474747;letter-spacing:-0.13px">Response</div>
<div class="t" id="dt_dtab4" style="left:943.0px;top:809.7px;font-size:15.7px;color:#474747;letter-spacing:0.63px">Initiator</div>
<div class="t" id="dt_dtab5" style="left:1024.0px;top:809.7px;font-size:15.7px;color:#474747;letter-spacing:0.70px">Timing</div>
<div class="t" id="dt_dtab6" style="left:1099.0px;top:809.7px;font-size:15.7px;color:#474747;letter-spacing:0.07px">Cookies</div>
<div class="t" id="dt_qsp" style="left:570.8px;top:849.1px;font-size:15px;color:#303030;font-weight:bold;letter-spacing:0.41px">Query String Parameters</div>
<div class="t" id="dt_vs" style="left:809.8px;top:848.0px;font-size:15.7px;color:#0b57d0;letter-spacing:0.23px">View source</div>
<div class="t" id="dt_vu" style="left:965.5px;top:848.0px;font-size:15.7px;color:#0b57d0;letter-spacing:0.18px">View URL-encoded</div>
<div class="t" id="dt_k1" style="left:563.2px;top:884.1px;font-size:15px;color:#474747;letter-spacing:0.03px">page</div>
<div class="t" id="dt_k2" style="left:563.2px;top:911.8px;font-size:15px;color:#474747;letter-spacing:-0.30px;transform:scaleX(0.989);transform-origin:0 50%">pageSize</div>
<div class="t" id="dt_k3" style="left:563.2px;top:939.1px;font-size:15px;color:#474747;letter-spacing:0.36px">type</div>
<div class="t" id="dt_v1" style="left:766.5px;top:884.1px;font-size:15px;color:#1f1f1f">1</div>
<div class="t" id="dt_v2" style="left:766.5px;top:911.8px;font-size:15px;color:#1f1f1f;letter-spacing:0.21px">10</div>
<div class="t" id="dt_v3" style="left:766.2px;top:939.4px;font-size:14.6px;color:#1f1f1f;letter-spacing:0.40px">离职</div>
<div class="t" id="dt_err" style="left:1797.5px;top:605.7px;font-size:15.5px;color:#474747">1</div>
<!-- DT-END -->
<!-- AN-START -->
<svg class="abs" style="left:0;top:0" width="1920" height="970" viewBox="0 0 1920 970">
<path d="M586.500 213.400L559.200 235.200 567.500 239 502 366 575.700 244.200 581.800 248.200Z" fill="#f94d4f"/>
<rect x="1357.700" y="388.600" width="126.400" height="170.600" rx="1.500" fill="none" stroke="#f94f51" stroke-width="4.800"/>
<path d="M807.800 946.200L838.600 930 838.800 938.300 943 932.200 839.900 947.800 841.300 955.700Z" fill="#f94d4f"/>
</svg>
<!-- AN-END -->
</body>
</html>
